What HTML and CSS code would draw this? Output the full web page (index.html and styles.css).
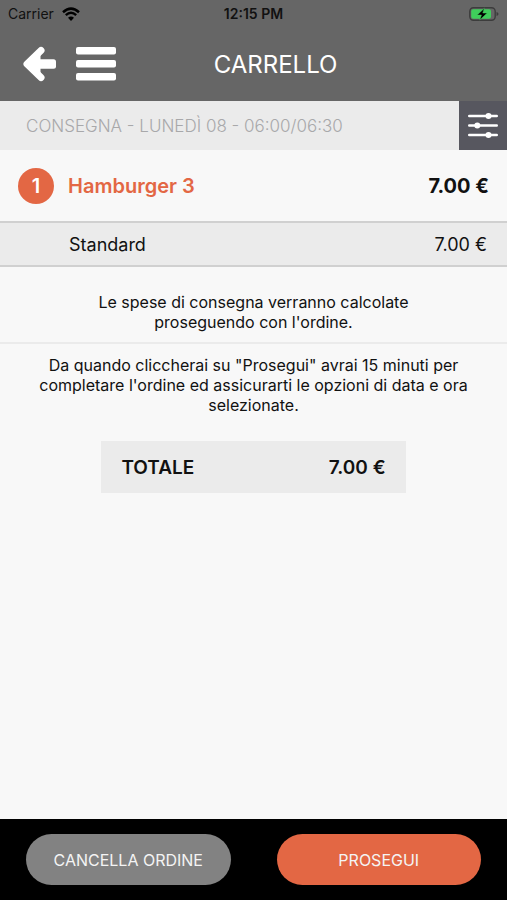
FILE: index.html
```html
<!DOCTYPE html>
<html lang="it">
<head>
<meta charset="utf-8">
<meta name="viewport" content="width=device-width, initial-scale=1">
<title>Carrello</title>
<link rel="stylesheet" href="styles.css">
</head>
<body>
<div class="app">
  <header class="top">
    <div class="status">
      <div class="carrier">
        <span>Carrier</span>
        <svg class="wifi" viewBox="0 0 18 14" aria-hidden="true">
          <path d="M1 5.2Q9-2 17 5.2" fill="none" stroke="#000" stroke-width="2.5"/>
          <path d="M3.8 8.2Q9 3.4 14.2 8.2" fill="none" stroke="#000" stroke-width="2.4"/>
          <path d="M6 10.8Q9 8.2 12 10.8L9 14Z" fill="#000"/>
        </svg>
      </div>
      <time class="clock">12:15 PM</time>
      <svg class="battery" viewBox="0 0 30 14" aria-hidden="true">
        <rect x=".8" y=".8" width="25.4" height="12.4" rx="3.6" fill="none" stroke="#3c3c3c" stroke-width="1.4"/>
        <rect x="2.2" y="2.2" width="19.8" height="9.600" rx="2" fill="#3fcf5b"/>
        <path d="M27.500 5v4q2-.6 2-2t-2-2Z" fill="#3c3c3c"/>
        <path d="M15.400 1.200 8.200 8h4.200l-1.600 5L18.200 6h-4.400Z" fill="#000" stroke="#3fcf5b" stroke-width=".5"/>
      </svg>
    </div>
    <div class="navbar">
      <div class="nav-actions">
        <button class="icon-button" type="button" aria-label="Indietro">
          <svg class="back" viewBox="0 0 34 36" aria-hidden="true">
            <path d="M19 4.500 5 18 19 31.500" fill="none" stroke="#fff" stroke-width="7" stroke-linecap="round" stroke-linejoin="round"/>
            <path d="M4 18 18.500 5V31Z" fill="#fff"/>
            <rect x="12" y="13.300" width="22" height="9.400" rx="2.500" fill="#fff"/>
          </svg>
        </button>
        <button class="icon-button" type="button" aria-label="Menu">
          <svg class="menu" viewBox="0 0 40 34" aria-hidden="true">
            <g fill="#fff"><rect y="0" width="40" height="7.500" rx="2"/><rect y="13" width="40" height="7.500" rx="2"/><rect y="26" width="40" height="7.500" rx="2"/></g>
          </svg>
        </button>
      </div>
      <h1 class="title">CARRELLO</h1>
    </div>
  </header>

  <main class="cart">
    <section class="delivery">
      <p class="slot">CONSEGNA - LUNEDÌ 08 - 06:00/06:30</p>
      <button class="options" type="button" aria-label="Opzioni">
        <svg class="sliders" viewBox="0 0 30 26" aria-hidden="true">
          <path d="M1.200 3H28.800M1.200 12.500H28.800M1.200 22H28.800" stroke="#fff" stroke-width="2.400" stroke-linecap="round"/>
          <g fill="#fff"><circle cx="20.500" cy="3" r="3"/><circle cx="9.300" cy="12.500" r="3"/><circle cx="20.500" cy="22" r="3"/></g>
        </svg>
      </button>
    </section>
    <section class="item">
      <span class="quantity">1</span>
      <h2 class="item-name">Hamburger 3</h2>
      <span class="item-price">7.00 €</span>
    </section>
    <section class="variant">
      <span>Standard</span>
      <span>7.00 €</span>
    </section>
    <p class="note shipping">Le spese di consegna verranno calcolate proseguendo con l'ordine.</p>
    <p class="note timing">Da quando cliccherai su "Prosegui" avrai 15 minuti per completare l'ordine ed assicurarti le opzioni di data e ora selezionate.</p>
    <section class="total">
      <span>TOTALE</span>
      <span>7.00 €</span>
    </section>
  </main>

  <footer class="actions">
    <button class="pill cancel" type="button">CANCELLA ORDINE</button>
    <button class="pill proceed" type="button">PROSEGUI</button>
  </footer>
</div>
</body>
</html>
```
FILE: styles.css
```css
* {
  box-sizing: border-box;
}

body,
h1,
h2,
p {
  margin: 0;
}

body {
  background: #f8f8f8;
  color: #111;
  font-family: Inter, "Liberation Sans", sans-serif;
  font-size: 16px;
}

button {
  border: 0;
  padding: 0;
  font: inherit;
  cursor: pointer;
}

svg {
  display: block;
}

.app {
  display: flex;
  flex-direction: column;
  min-height: 100vh;
}

.top {
  background: #666;
}

.status {
  display: grid;
  grid-template-columns: 1fr auto 1fr;
  align-items: center;
  height: 27px;
  padding: 0 8px;
  color: #111;
  font-size: 14px;
}

.carrier {
  display: flex;
  align-items: center;
  gap: 8px;
}

.wifi {
  width: 18px;
  height: 14px;
}

.clock {
  font-weight: 600;
}

.battery {
  justify-self: end;
  width: 30px;
  height: 14px;
}

.navbar {
  display: grid;
  grid-template-columns: 1fr auto 1fr;
  align-items: center;
  height: 74px;
  padding: 0 22px;
}

.nav-actions {
  display: flex;
  align-items: center;
  gap: 20px;
}

.icon-button {
  background: none;
}

.back {
  width: 34px;
  height: 36px;
}

.menu {
  width: 40px;
  height: 34px;
}

.title {
  grid-column: 2;
  margin-left: 44px;
  color: #fff;
  font-size: 24px;
  font-weight: 400;
}

.cart {
  flex: 1;
}

.delivery {
  display: flex;
  align-items: center;
  justify-content: space-between;
  height: 49px;
  padding-left: 26px;
  background: #ebebeb;
}

.slot {
  color: #a8a8aa;
  font-size: 17px;
  font-weight: 300;
}

.options {
  display: grid;
  place-items: center;
  width: 48px;
  height: 100%;
  background: #57575f;
}

.sliders {
  width: 30px;
  height: 26px;
}

.item {
  display: flex;
  align-items: center;
  gap: 14px;
  height: 71px;
  padding: 0 18px;
}

.quantity {
  display: grid;
  place-items: center;
  width: 36px;
  height: 36px;
  border-radius: 50%;
  background: #e36744;
  color: #fff;
  font-size: 20px;
  font-weight: 600;
}

.item-name {
  flex: 1;
  color: #e36744;
  font-size: 20px;
  font-weight: 600;
}

.item-price {
  font-size: 20px;
  font-weight: 700;
}

.variant {
  display: flex;
  align-items: center;
  justify-content: space-between;
  height: 46px;
  padding: 0 20px 0 69px;
  border-top: 2px solid #d0d0d0;
  border-bottom: 2px solid #d0d0d0;
  background: #ebebeb;
  font-size: 18px;
}

.note {
  font-size: 16px;
  line-height: 20px;
  text-align: center;
}

.shipping {
  padding: 25px 80px 10px;
  border-bottom: 2px solid #ebebeb;
}

.timing {
  padding: 11px 24px 26px;
}

.total {
  display: flex;
  align-items: center;
  justify-content: space-between;
  width: 60%;
  height: 52px;
  margin: 0 auto;
  padding: 0 20px;
  background: #ebebeb;
  font-size: 19px;
  font-weight: 600;
}

.actions {
  display: flex;
  gap: 46px;
  padding: 15px 26px;
  background: #000;
}

.pill {
  flex: 1;
  height: 51px;
  border-radius: 26px;
  color: #f4f4f4;
  font-size: 16px;
  font-weight: 400;
}

.cancel {
  background: #828282;
}

.proceed {
  background: #e36744;
}
```
